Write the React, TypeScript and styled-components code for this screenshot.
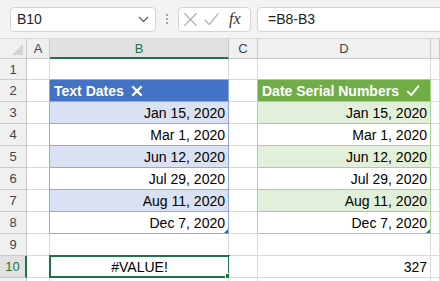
import React from 'react'
import styled, { createGlobalStyle } from 'styled-components'

const GlobalStyle = createGlobalStyle`
  html, body {
    margin: 0;
    padding: 0;
    background: #ffffff;
  }
  body {
    font-family: "Liberation Sans", Arial, sans-serif;
    overflow: hidden;
  }
`

const GRID = '#dadada'
const HEAD_LINE = '#c8c8c8'
const EXCEL_GREEN = '#217346'

const Window = styled.div`
  width: 440px;
  height: 281px;
  overflow: hidden;
  display: flex;
  flex-direction: column;
  background: #ffffff;
`

const FormulaBar = styled.div`
  flex: none;
  height: 38px;
  box-sizing: border-box;
  background: #f3f3f3;
  display: flex;
  align-items: center;
  padding-left: 10px;
`

const NameBox = styled.div`
  width: 146px;
  height: 25px;
  box-sizing: border-box;
  border: 1px solid #d4d4d4;
  border-radius: 4px;
  background: #ffffff;
  display: flex;
  align-items: center;
  justify-content: space-between;
  padding: 0 6px 0 6px;
  font-size: 14px;
  color: #222222;
`

const Dots = styled.div`
  width: 22px;
  display: flex;
  flex-direction: column;
  align-items: center;
  gap: 2px;

  span {
    width: 2px;
    height: 2px;
    border-radius: 1px;
    background: #8a8a8a;
  }
`

const FxBox = styled.div`
  width: 73px;
  height: 25px;
  box-sizing: border-box;
  border: 1px solid #d4d4d4;
  border-radius: 4px;
  background: #ffffff;
  display: flex;
  align-items: center;
  padding-left: 3px;
  gap: 4px;
`

const FxLabel = styled.span`
  font-family: "Liberation Serif", "Times New Roman", serif;
  font-style: italic;
  font-size: 16px;
  color: #333333;
  margin-left: 5px;
`

const FormulaInput = styled.div`
  flex: 1;
  height: 25px;
  margin-left: 6px;
  margin-right: -10px;
  box-sizing: border-box;
  border: 1px solid #d4d4d4;
  border-radius: 4px;
  background: #ffffff;
  display: flex;
  align-items: center;
  padding-left: 10px;
  font-size: 14px;
  color: #222222;
`

const Sheet = styled.div`
  flex: 1;
  overflow: hidden;
  display: grid;
  grid-template-columns: 27px 23px 179px 29px 173px 1fr;
  grid-template-rows: 20px 21px repeat(9, 22px) 22px;
  border-top: 1px solid #d9d9d9;
`

const ColHead = styled.div<{ $selected?: boolean }>`
  box-sizing: border-box;
  display: flex;
  align-items: center;
  justify-content: center;
  background: ${(p) => (p.$selected ? '#e1e1e1' : '#f0f0f0')};
  border-right: 1px solid ${HEAD_LINE};
  border-bottom: ${(p) => (p.$selected ? `2px solid ${EXCEL_GREEN}` : `1px solid ${HEAD_LINE}`)};
  color: ${(p) => (p.$selected ? EXCEL_GREEN : '#444444')};
  font-size: 13px;
`

const Corner = styled.div`
  position: relative;
  box-sizing: border-box;
  background: #f0f0f0;
  border-right: 1px solid ${HEAD_LINE};
  border-bottom: 1px solid ${HEAD_LINE};
`

const CornerTriangle = styled.div`
  position: absolute;
  right: 3px;
  bottom: 3px;
  width: 0;
  height: 0;
  border-left: 11px solid transparent;
  border-bottom: 11px solid #d2d2d2;
`

const RowHead = styled.div<{ $selected?: boolean }>`
  box-sizing: border-box;
  display: flex;
  align-items: center;
  justify-content: center;
  background: ${(p) => (p.$selected ? '#e1e1e1' : '#f0f0f0')};
  border-right: ${(p) => (p.$selected ? `2px solid ${EXCEL_GREEN}` : `1px solid ${HEAD_LINE}`)};
  border-bottom: 1px solid ${HEAD_LINE};
  color: ${(p) => (p.$selected ? EXCEL_GREEN : '#444444')};
  font-size: 13px;
`

const Cell = styled.div<{
  $right: string
  $bottom: string
  $fill?: string
  $align?: 'left' | 'center' | 'right'
  $header?: boolean
}>`
  position: relative;
  box-sizing: border-box;
  display: flex;
  align-items: center;
  justify-content: ${(p) =>
    p.$align === 'right' ? 'flex-end' : p.$align === 'center' ? 'center' : 'flex-start'};
  padding: 0 3px 0 4px;
  background: ${(p) => p.$fill ?? '#ffffff'};
  border-right: 1px solid ${(p) => p.$right};
  border-bottom: 1px solid ${(p) => p.$bottom};
  font-size: 14px;
  font-weight: ${(p) => (p.$header ? 700 : 400)};
  color: ${(p) => (p.$header ? '#ffffff' : '#000000')};
  white-space: nowrap;
  gap: 7px;
`

const Selection = styled.div`
  position: absolute;
  top: -1px;
  left: -1px;
  right: -2px;
  bottom: -1px;
  border: 2px solid ${EXCEL_GREEN};
  pointer-events: none;
`

const FillHandle = styled.div`
  position: absolute;
  right: -5px;
  bottom: -5px;
  width: 6px;
  height: 6px;
  background: ${EXCEL_GREEN};
  border: 1px solid #ffffff;
`

const ResizeMark = styled.div<{ $color: string }>`
  position: absolute;
  right: 0;
  bottom: 0;
  width: 0;
  height: 0;
  border-left: 4px solid transparent;
  border-bottom: 4px solid ${(p) => p.$color};
`

// E is only a sliver at the right edge, its letter sits off-screen
const COLUMNS = ['A', 'B', 'C', 'D', 'E']
const VISIBLE_LETTERS = ['A', 'B', 'C', 'D']
const DATES = ['Jan 15, 2020', 'Mar 1, 2020', 'Jun 12, 2020', 'Jul 29, 2020', 'Aug 11, 2020', 'Dec 7, 2020']

const BLUE = { head: '#4472c4', band: '#d9e1f2', line: '#8ea9db', mark: '#3c5fa8' }
const GREEN = { head: '#70ad47', band: '#e2efda', line: '#a9d08e', mark: '#3c5fa8' }

const inTable = (r: number) => r >= 2 && r <= 8

const rightLine = (r: number, col: string) => {
  if (inTable(r) && (col === 'A' || col === 'B')) return BLUE.line
  if (inTable(r) && (col === 'C' || col === 'D')) return GREEN.line
  return GRID
}

const bottomLine = (r: number, col: string) => {
  if (r >= 1 && r <= 8 && col === 'B') return BLUE.line
  if (r >= 1 && r <= 8 && col === 'D') return GREEN.line
  return GRID
}

const CrossIcon = ({ color, size, weight }: { color: string; size: number; weight: number }) => (
  <svg width={size} height={size} viewBox="0 0 12 12">
    <path d="M2 2 L10 10 M10 2 L2 10" stroke={color} strokeWidth={weight} strokeLinecap="round" fill="none" />
  </svg>
)

const CheckIcon = ({ color, size, weight }: { color: string; size: number; weight: number }) => (
  <svg width={size} height={size} viewBox="0 0 12 12">
    <path d="M1.5 6.5 L4.5 9.5 L10.5 2" stroke={color} strokeWidth={weight} strokeLinecap="round" strokeLinejoin="round" fill="none" />
  </svg>
)

const Chevron = () => (
  <svg width="11" height="7" viewBox="0 0 11 7">
    <path d="M1 1 L5.5 5.5 L10 1" stroke="#555555" strokeWidth="1.2" fill="none" />
  </svg>
)

const renderCell = (r: number, col: string) => {
  const key = `${col}${r}`
  const right = rightLine(r, col)
  const bottom = bottomLine(r, col)

  if (col === 'B' || col === 'D') {
    const theme = col === 'B' ? BLUE : GREEN
    if (r === 2) {
      return (
        <Cell key={key} $right={right} $bottom={bottom} $fill={theme.head} $header>
          {col === 'B' ? 'Text Dates' : 'Date Serial Numbers'}
          {col === 'B' ? (
            <CrossIcon color="#ffffff" size={12} weight={2.4} />
          ) : (
            <CheckIcon color="#ffffff" size={14} weight={1.6} />
          )}
        </Cell>
      )
    }
    if (r >= 3 && r <= 8) {
      return (
        <Cell key={key} $right={right} $bottom={bottom} $fill={r % 2 === 1 ? theme.band : '#ffffff'} $align="right">
          {DATES[r - 3]}
          {r === 8 && <ResizeMark $color={theme.mark} />}
        </Cell>
      )
    }
    if (r === 10) {
      return col === 'B' ? (
        <Cell key={key} $right={right} $bottom={bottom} $align="center">
          #VALUE!
          <Selection>
            <FillHandle />
          </Selection>
        </Cell>
      ) : (
        <Cell key={key} $right={right} $bottom={bottom} $align="right">
          327
        </Cell>
      )
    }
  }

  return <Cell key={key} $right={right} $bottom={bottom} />
}

const App = () => {
  const rows = Array.from({ length: 11 }, (_, i) => i + 1)

  return (
    <>
      <GlobalStyle />
      <Window>
        <FormulaBar>
          <NameBox>
            B10
            <Chevron />
          </NameBox>
          <Dots>
            <span />
            <span />
            <span />
          </Dots>
          <FxBox>
            <CrossIcon color="#b5b5b5" size={17} weight={1} />
            <CheckIcon color="#b5b5b5" size={17} weight={1} />
            <FxLabel>fx</FxLabel>
          </FxBox>
          <FormulaInput>=B8-B3</FormulaInput>
        </FormulaBar>

        <Sheet>
          <Corner>
            <CornerTriangle />
          </Corner>
          {COLUMNS.map((c) => (
            <ColHead key={c} $selected={c === 'B'}>
              {VISIBLE_LETTERS.includes(c) ? c : null}
            </ColHead>
          ))}

          {rows.map((r) => (
            <React.Fragment key={r}>
              <RowHead $selected={r === 10}>{r}</RowHead>
              {COLUMNS.map((c) => renderCell(r, c))}
            </React.Fragment>
          ))}
        </Sheet>
      </Window>
    </>
  )
}

export default App
